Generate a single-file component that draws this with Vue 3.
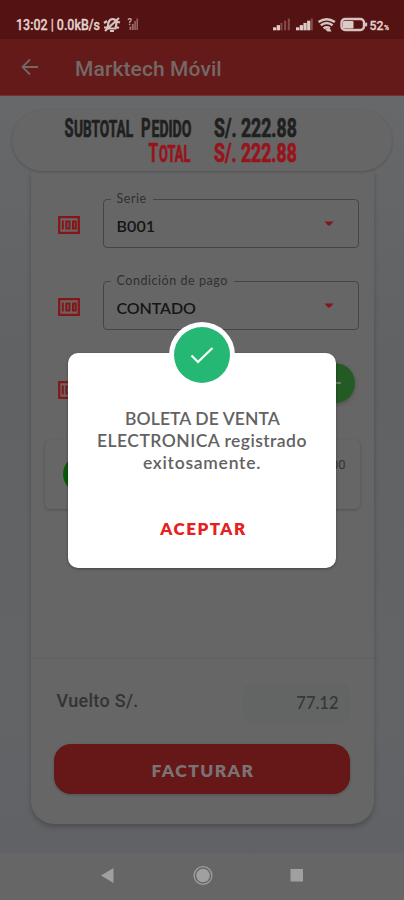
<template>
  <div class="screen">
    <header class="status-bar">
      <svg width="404" height="39" viewBox="0 0 404 39">
        <g class="status-text">
          <text x="16" y="30" textLength="84" lengthAdjust="spacingAndGlyphs">13:02 | 0.0kB/s</text>
          <text x="369.500" y="29.500" class="percent" textLength="14" lengthAdjust="spacingAndGlyphs">52</text>
          <text x="384" y="29.500" class="tiny" textLength="5" lengthAdjust="spacingAndGlyphs">%</text>
        </g>
        <g fill="none" stroke="#d6c4c0" stroke-width="2.200">
          <path d="M107.500 28.500l1-6q1-3.500 4.500-3.500 3.500 0.500 3.500 4l-1 5.500zM105 31l14-13M110 31h4M104 23l3-2M120 22.500l-3.500-1M104 27.500h3M116 27l3 1" />
        </g>
        <text x="127.500" y="25" class="question">?</text>
        <g fill="#9a6d6a">
          <rect x="129.500" y="26.500" width="1.800" height="3.500" />
          <rect x="131.900" y="24" width="1.800" height="6" />
          <rect x="134.300" y="21" width="1.500" height="9" />
          <rect x="136.500" y="18.500" width="1.400" height="11.500" />
        </g>
        <g v-for="signal in signals" :key="signal.x">
          <rect
            v-for="n in 5"
            :key="n"
            :x="signal.x + (n - 1) * 3.7"
            :y="29.5 - n * 2.2"
            :width="n <= signal.level ? 3.3 : 2"
            :height="n * 2.2 + 0.8"
            :fill="n <= signal.level ? '#dccbc7' : '#854b48'"
          />
        </g>
        <g fill="none" stroke="#d6c4c0" stroke-width="2.400">
          <path d="M318.500 22q8.200-5.500 16.400 0M320.800 25.300q5.900-4.500 11.800 0M323.500 28.300q3.200-2.200 6.400 0" />
        </g>
        <path d="M324.500 28.500h5.500l1.500 3h-4z" fill="#d6c4c0" />
        <rect x="341.500" y="19" width="22.500" height="11" rx="3.500" fill="#541212" stroke="#d6c4c0" stroke-width="2.400" />
        <rect x="343" y="21" width="10.500" height="7.500" rx="1" fill="#dccbc7" />
        <rect x="365" y="22.500" width="2.200" height="4" rx="1" fill="#d6c4c0" />
      </svg>
    </header>

    <div class="app-bar">
      <svg class="back" width="18" height="18" viewBox="0 0 18 18">
        <path d="M17 9H2M9 1.500L1.500 9L9 16.500" fill="none" stroke="#746866" stroke-width="1.800" />
      </svg>
      <h1>Marktech Móvil</h1>
    </div>

    <main class="content">
      <section class="totals">
        <svg width="380" height="61" viewBox="0 0 380 61">
          <g
            v-for="line in totals"
            :key="line.style"
            class="condensed"
            :class="line.style"
          >
            <text
              v-for="part in line.parts"
              :key="part.x"
              :class="{ cap: part.cap }"
              :transform="`translate(${part.x} ${line.y}) scale(${part.scale} 1)`"
            >{{ part.text }}</text>
          </g>
        </svg>
      </section>

      <section class="card">
        <div class="form">
          <div v-for="field in fields" :key="field.label" class="form-row">
            <svg class="money" width="22" height="18" viewBox="0 0 22 18">
              <path :d="moneyFrame" class="money-frame" />
              <path :d="moneyDigits" class="money-digits" />
            </svg>
            <div class="select">
              <span class="select-label">{{ field.label }}</span>
              <span class="select-value" :class="field.style">{{ field.value }}</span>
              <svg width="10" height="6" viewBox="0 0 10 6"><path d="M0.500 0.500H9.500L6 4.500H4z" fill="#861518" /></svg>
            </div>
          </div>
          <div class="form-row add-row">
            <svg class="money" width="22" height="18" viewBox="0 0 22 18">
              <path :d="moneyFrame" class="money-frame" />
              <path :d="moneyDigits" class="money-digits" />
            </svg>
            <button class="add">
              <svg width="12" height="12" viewBox="0 0 12 12"><path d="M0 6H12M6 0V12" stroke="#687868" stroke-width="1.800" /></svg>
            </button>
          </div>
        </div>

        <div class="payment">
          <span class="payment-dot"></span>
          <span class="payment-amount">300.00</span>
        </div>

        <footer class="card-footer">
          <div class="change">
            <span class="change-label">Vuelto S/.</span>
            <span class="change-value">77.12</span>
          </div>
          <button class="invoice">FACTURAR</button>
        </footer>
      </section>
    </main>

    <nav class="nav-bar">
      <svg width="404" height="46" viewBox="0 0 404 46">
        <path d="M101 22.500L113.500 15V30z" fill="#a0a0a0" />
        <circle cx="203" cy="22.500" r="8.900" fill="none" stroke="#a0a0a0" stroke-width="1.200" />
        <circle cx="203" cy="22.500" r="6.800" fill="#a0a0a0" />
        <rect x="290.500" y="16" width="12.500" height="12.500" fill="#a0a0a0" />
      </svg>
    </nav>

    <!-- Success dialog -->
    <div class="dialog" role="dialog">
      <div class="dialog-badge">
        <svg width="66" height="66" viewBox="0 0 66 66">
          <circle cx="33" cy="33" r="33" fill="#fff" />
          <circle cx="33" cy="33" r="28" fill="#25b875" />
          <path d="M22.500 33.500L29 40L43.500 26" fill="none" stroke="#f4fff9" stroke-width="2.300" />
        </svg>
      </div>
      <p class="message">
        <span class="line-one">BOLETA DE VENTA</span>
        <span class="line-two">ELECTRONICA registrado</span>
        <span class="line-three">exitosamente.</span>
      </p>
      <button class="accept">ACEPTAR</button>
    </div>
  </div>
</template>

<script setup>
const signals = [
  { x: 273, level: 2 },
  { x: 296, level: 4 },
];

// Small caps: the first letter of each word is drawn larger
const totals = [
  {
    style: 'dark',
    y: 26.5,
    parts: [
      { text: 'S', x: 52.5, scale: 0.56, cap: true },
      { text: 'UBTOTAL', x: 62, scale: 0.595 },
      { text: 'P', x: 129, scale: 0.57, cap: true },
      { text: 'EDIDO', x: 139.5, scale: 0.61 },
      { text: 'S/. 222.88', x: 202, scale: 0.68, cap: true },
    ],
  },
  {
    style: 'red',
    y: 52,
    parts: [
      { text: 'T', x: 136.5, scale: 0.6, cap: true },
      { text: 'OTAL', x: 147, scale: 0.56 },
      { text: 'S/. 222.88', x: 202, scale: 0.68, cap: true },
    ],
  },
];

const fields = [
  { label: 'Serie', value: 'B001', style: 'short' },
  { label: 'Condición de pago', value: 'CONTADO', style: 'long' },
];

// Bill outline and the "100" strokes inside it
const moneyFrame = 'M1.2 1.2H20.800V16.800H1.200z';
const moneyDigits = 'M4.800 4.500V13.500M8.300 5.500H11.500V12.500H8.300zM15 5.500H17.700V12.500H15z';
</script>

<style>
body {
  margin: 0;
}
</style>

<style scoped>
.screen {
  position: relative;
  display: flex;
  flex-direction: column;
  width: 404px;
  height: 900px;
  overflow: hidden;
  background: #666;
  font-family: Lato, "Open Sans", sans-serif;
}

svg {
  display: block;
  flex-shrink: 0;
}

button {
  border: 0;
  padding: 0;
  font-family: inherit;
}

.status-bar {
  height: 39px;
  background: #541212;
}

.status-text {
  font: 500 14px Roboto, sans-serif;
  fill: #e1d3d0;
  stroke: #e1d3d0;
  stroke-width: 0.3px;
}

.percent {
  font-size: 13.500px;
}

.tiny {
  font-size: 8px;
}

.question {
  font: bold 9px Roboto, sans-serif;
  fill: #c4aaa7;
}

.app-bar {
  display: flex;
  align-items: center;
  height: 57px;
  box-sizing: border-box;
  padding-left: 21px;
  border-bottom: 1px solid #76302f;
  background: #641a19;
}

.app-bar h1 {
  margin: 3px 0 0 36px;
  font: 500 21px Roboto, sans-serif;
  letter-spacing: 0.1px;
  color: #746866;
}

.content {
  display: flex;
  flex-direction: column;
  align-items: center;
  height: 757px;
  box-sizing: border-box;
  padding-top: 14px;
  background: linear-gradient(#66686a, #606264 35%, #626466 80%, #606266);
}

.totals {
  z-index: 1;
  width: 380px;
  height: 61px;
  border-radius: 31px;
  background: #666;
  box-shadow: 0 1px 3px rgba(0, 0, 0, 0.2);
}

.condensed {
  font: bold 23px Roboto, sans-serif;
  stroke-width: 0.7px;
}

.cap {
  font-size: 26px;
}

.dark {
  fill: #202020;
  stroke: #202020;
}

.red {
  fill: #98131a;
  stroke: #98131a;
}

.card {
  display: flex;
  flex-direction: column;
  width: 343px;
  height: 653px;
  border-radius: 0 0 23px 23px;
  background: #666;
  box-shadow: 0 3px 5px rgba(0, 0, 0, 0.22);
}

.form {
  display: flex;
  flex-direction: column;
  gap: 33px;
  height: 269px;
  box-sizing: border-box;
  padding: 28px 15px 0 27px;
}

.form-row {
  display: flex;
  align-items: center;
  gap: 23px;
  height: 49px;
}

.money {
  margin-top: 3px;
}

.money-frame,
.money-digits {
  fill: none;
  stroke: #861518;
  stroke-width: 2.200px;
}

.money-digits {
  stroke-width: 2px;
}

.select {
  position: relative;
  display: flex;
  align-items: center;
  justify-content: space-between;
  width: 256px;
  height: 49px;
  box-sizing: border-box;
  padding: 3px 24px 0 13px;
  border: 1px solid #454545;
  border-radius: 4px;
}

.select svg {
  margin-top: -2px;
}

.select-label {
  position: absolute;
  top: -9px;
  left: 7px;
  padding: 0 6px;
  background: #666;
  font-size: 12.500px;
  line-height: 16px;
  letter-spacing: 0.55px;
  color: #303030;
}

.select-value {
  font-size: 16px;
  font-weight: 600;
  color: #151515;
}

.short {
  letter-spacing: 0.1px;
}

.long {
  letter-spacing: -0.1px;
}

.add-row {
  height: 40px;
  justify-content: space-between;
  padding-right: 3px;
}

.add-row .money {
  margin-top: 14px;
}

.add {
  display: grid;
  place-items: center;
  width: 40px;
  height: 40px;
  margin-right: 1px;
  border-radius: 50%;
  background: #245b24;
  box-shadow: 0 2px 4px rgba(0, 0, 0, 0.2);
}

.payment {
  display: flex;
  justify-content: space-between;
  height: 69px;
  box-sizing: border-box;
  margin: 0 14px;
  padding: 16px 14px 0 18px;
  border-radius: 5px;
  background: #666;
  box-shadow: 0 1px 3px rgba(0, 0, 0, 0.22);
}

.payment-dot {
  width: 38px;
  height: 38px;
  margin-top: -1px;
  border-radius: 50%;
  background: #075b0b;
}

.payment-amount {
  font: 13px/18px Roboto, sans-serif;
  color: #333;
}

.card-footer {
  height: 166px;
  box-sizing: border-box;
  margin-top: auto;
  padding: 24px 24px 0 23px;
  border-top: 1px solid #606060;
}

.change {
  display: flex;
  align-items: center;
  justify-content: space-between;
  height: 40px;
  margin-bottom: 21px;
  padding-left: 3px;
}

.change-label {
  margin-top: -5px;
  font: 500 18px Roboto, sans-serif;
  letter-spacing: 0.3px;
  color: #333;
}

.change-value {
  width: 107px;
  box-sizing: border-box;
  padding-right: 11px;
  border-radius: 8px;
  background: #636565;
  font-size: 16.500px;
  font-weight: 600;
  line-height: 39px;
  text-align: right;
  color: #383838;
}

.invoice {
  display: block;
  width: 296px;
  height: 50px;
  padding-left: 3px;
  border-radius: 17px;
  background: #651817;
  box-shadow: 0 1px 3px rgba(0, 0, 0, 0.2);
  font-size: 17.500px;
  font-weight: 800;
  letter-spacing: 1.400px;
  line-height: 54px;
  color: #7b7373;
}

.nav-bar {
  height: 46px;
  background: #666;
}

.dialog {
  position: absolute;
  z-index: 2;
  top: 353px;
  left: 68px;
  display: flex;
  flex-direction: column;
  align-items: center;
  width: 268px;
  height: 215px;
  box-sizing: border-box;
  padding-top: 55px;
  border-radius: 10px;
  background: #fff;
  box-shadow: 0 1px 3px rgba(0, 0, 0, 0.35);
}

.dialog-badge {
  position: absolute;
  top: -31px;
  left: 101px;
}

.message {
  display: flex;
  flex-direction: column;
  align-items: center;
  margin: 0;
  font-size: 17.500px;
  font-weight: 600;
  line-height: 22px;
  color: #626262;
}

.line-one {
  padding-left: 1px;
  letter-spacing: 0.1px;
}

.line-two {
  letter-spacing: 0.45px;
}

.line-three {
  letter-spacing: 0.75px;
}

.accept {
  margin-top: 43px;
  padding-left: 3px;
  background: none;
  font-size: 17px;
  font-weight: 800;
  letter-spacing: 1.500px;
  line-height: 24px;
  color: #e5201d;
}
</style>
